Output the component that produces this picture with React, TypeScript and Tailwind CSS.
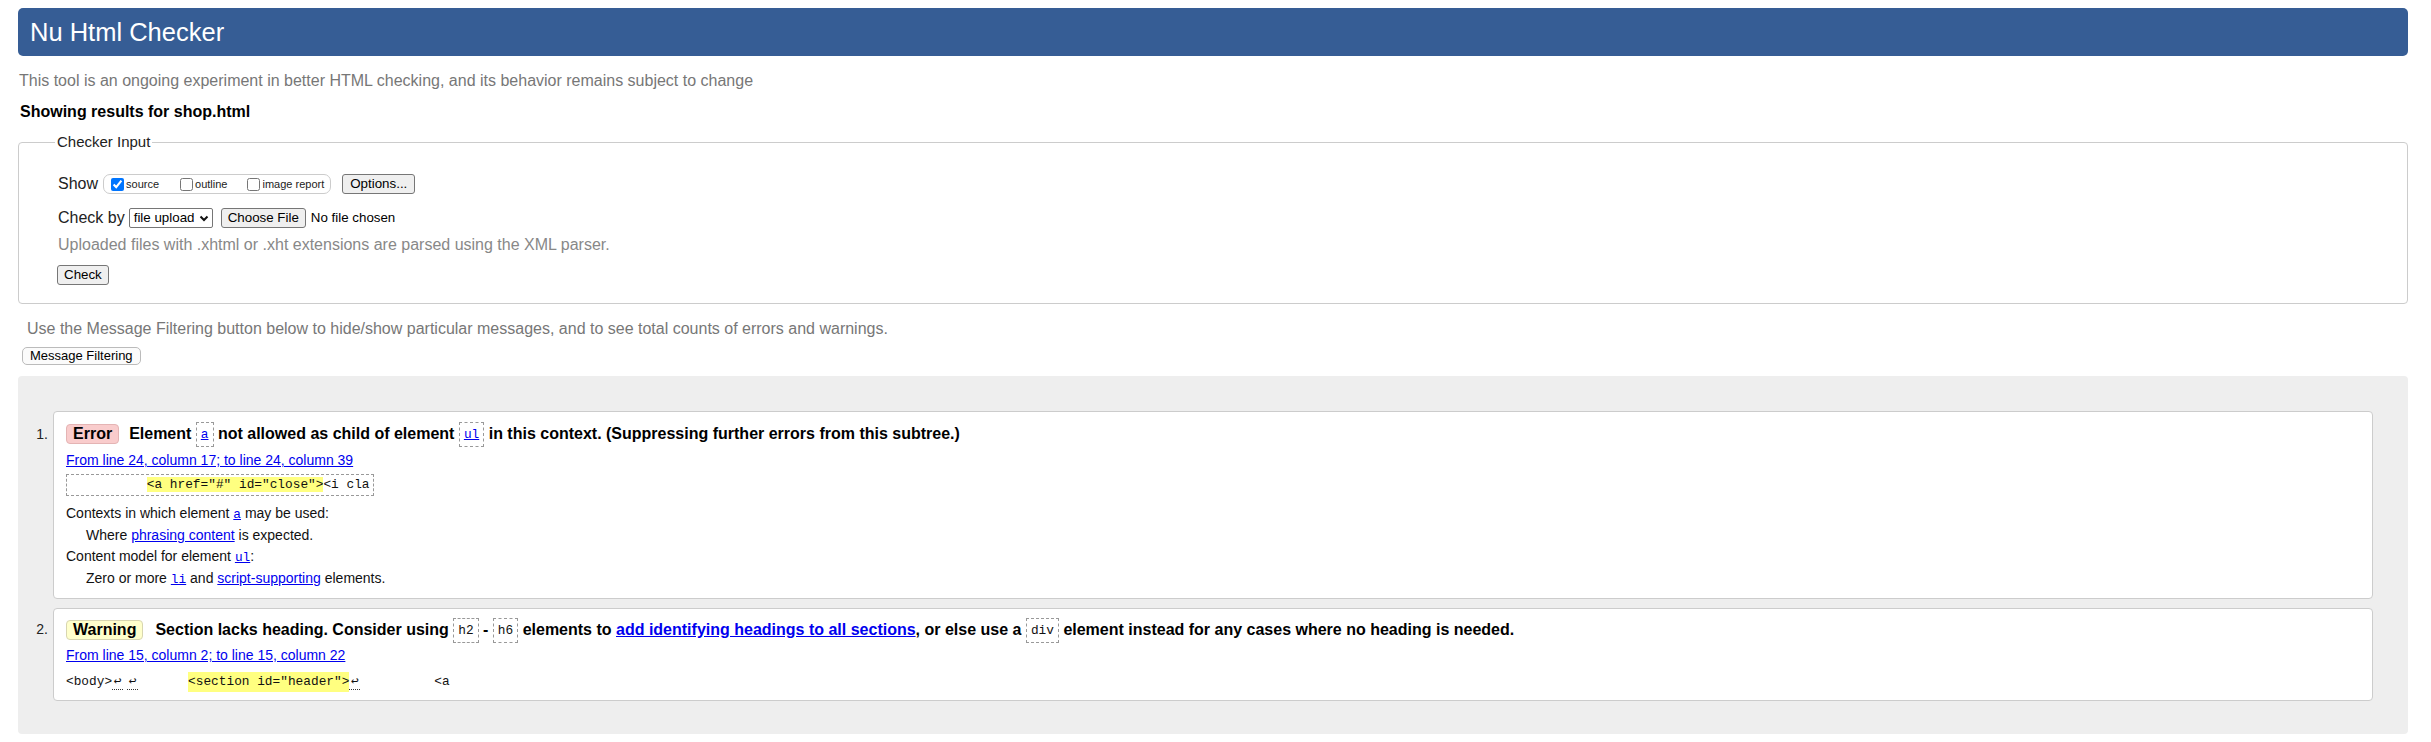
import type { ReactNode } from 'react';

function CodeBox({ children, link }: { children: ReactNode; link?: boolean }) {
    return (
        <span className="inline-block h-[25px] border border-dashed border-[#999] px-[4px] align-middle font-['Liberation_Mono',monospace] text-[12.8px] font-normal leading-[23px] text-[#111]">
            {link ? (
                <a href="#" className="text-[#0000ee] underline">
                    {children}
                </a>
            ) : (
                children
            )}
        </span>
    );
}

function Link({ children, mono, bold }: { children: ReactNode; mono?: boolean; bold?: boolean }) {
    return (
        <a
            href="#"
            className={
                mono
                    ? "font-['Liberation_Mono',monospace] text-[12.8px] text-[#0000ee] underline"
                    : bold
                      ? 'font-bold text-[#0000ee] underline'
                      : 'text-[#0000ee] underline'
            }
        >
            {children}
        </a>
    );
}

function Newline() {
    return (
        <span className="inline-block w-[11px] border-b border-dotted border-[#333] text-center leading-[15px]">
            ↩
        </span>
    );
}

const btn =
    'h-[20px] rounded-[3px] border border-[#767676] bg-[#efefef] px-[6px] text-[13.33px] leading-[18px] text-black';

export default function App() {
    return (
        <div className="min-h-screen bg-white pl-[18px] pr-[23px] pt-[8px] pb-[10px] font-['Liberation_Sans',Arial,sans-serif] text-[#222]">
            <h1 className="h-[48px] rounded-[5px] bg-[#365d95] pl-[12px] text-[25.5px] font-normal leading-[48px] text-white">
                Nu Html Checker
            </h1>

            <p className="mt-[15px] pl-[1px] text-[16px] leading-[20px] text-[#777]">
                This tool is an ongoing experiment in better HTML checking, and its behavior remains subject to change
            </p>
            <p className="mt-[11px] pl-[2px] text-[16px] font-bold leading-[20px] text-black">
                Showing results for shop.html
            </p>

            <fieldset className="mt-[10px] rounded-[4px] border border-[#ccc] pb-[17px] pl-[36px]">
                <legend className="px-[2px] text-[15px] leading-[20px] text-[#222]">Checker Input</legend>

                <div className="mt-[21px] flex h-[22px] items-center pl-[3px]">
                    <span className="text-[16px]">Show</span>
                    <span className="ml-[5px] inline-flex h-[20px] items-center rounded-[7px] border border-[#ccc] pl-[7px] pr-[6px]">
                        <label className="flex items-center">
                            <input type="checkbox" defaultChecked className="m-0 h-[13px] w-[13px]" />
                            <span className="ml-[2px] text-[11px]">source</span>
                        </label>
                        <label className="ml-[21px] flex items-center">
                            <input type="checkbox" className="m-0 h-[13px] w-[13px]" />
                            <span className="ml-[2px] text-[11px]">outline</span>
                        </label>
                        <label className="ml-[20px] flex items-center">
                            <input type="checkbox" className="m-0 h-[13px] w-[13px]" />
                            <span className="ml-[2px] text-[11px]">image report</span>
                        </label>
                    </span>
                    <button className={`ml-[11px] px-[7px] ${btn}`}>Options...</button>
                </div>

                <div className="mt-[12px] flex h-[22px] items-center pl-[3px]">
                    <span className="text-[16px]">Check by</span>
                    <span className="ml-[4px] flex h-[20px] w-[84px] items-center justify-between rounded-[2px] border border-[#767676] pl-[4px] pr-[3px] text-[13.33px] text-black">
                        file upload
                        <svg width="10" height="7" viewBox="0 0 10 7">
                            <path d="M1.5 1.5 L5 5 L8.5 1.5" fill="none" stroke="#111" strokeWidth="2" />
                        </svg>
                    </span>
                    <button className={`ml-[8px] ${btn}`}>Choose File</button>
                    <span className="ml-[5px] text-[13.33px] text-black">No file chosen</span>
                </div>

                <p className="mt-[6px] pl-[3px] text-[16px] leading-[20px] text-[#888]">
                    Uploaded files with .xhtml or .xht extensions are parsed using the XML parser.
                </p>

                <div className="mt-[7px] pl-[2px]">
                    <button className={btn}>Check</button>
                </div>
            </fieldset>

            <p className="mt-[15px] pl-[9px] text-[16px] leading-[20px] text-[#777]">
                Use the Message Filtering button below to hide/show particular messages, and to see total counts of errors
                and warnings.
            </p>
            <button className="ml-[4px] mt-[8px] h-[18px] rounded-[5px] border border-[#bbb] bg-[#fbfbfb] px-[7px] text-[13px] leading-[16px] text-black">
                Message Filtering
            </button>

            <div className="mt-[9px] rounded-[4px] bg-[#eee] pb-[33px] pr-[35px] pt-[35px]">
                <div className="flex items-start">
                    <span className="mt-[13px] w-[35px] pr-[5px] text-right text-[14px] leading-[20px] text-[#222]">1.</span>
                    <div className="flex-1 rounded-[4px] border border-[#ccc] bg-white pb-[8px] pl-[12px] pt-[9px] text-[14px] leading-[21px] text-[#111]">
                        <div className="flex h-[26px] items-center">
                            <span className="rounded-[4px] border border-[#e4b4b4] bg-[#f9cccc] px-[6px] text-[16px] font-bold leading-[18px] text-black">
                                Error
                            </span>
                            <span className="ml-[10px] text-[16px] font-bold leading-[26px] text-black">
                                Element <CodeBox link>a</CodeBox> not allowed as child of element <CodeBox link>ul</CodeBox> in
                                this context. (Suppressing further errors from this subtree.)
                            </span>
                        </div>
                        <div className="mt-[3px] leading-[20px]">
                            <Link>From line 24, column 17; to line 24, column 39</Link>
                        </div>
                        <div className="mt-[4px] block h-[22px] w-fit whitespace-pre border border-dashed border-[#999] px-[3px] font-['Liberation_Mono',monospace] text-[12.8px] leading-[20px]">
                            {'          '}
                            <span className="bg-[#ffff80]">{'<a href="#" id="close">'}</span>
                            {'<i cla'}
                        </div>
                        <div className="mt-[7px]">
                            Contexts in which element <Link mono>a</Link> may be used:
                        </div>
                        <div className="pl-[20px]">
                            Where <Link>phrasing content</Link> is expected.
                        </div>
                        <div>
                            Content model for element <Link mono>ul</Link>:
                        </div>
                        <div className="pl-[20px]">
                            Zero or more <Link mono>li</Link> and <Link>script-supporting</Link> elements.
                        </div>
                    </div>
                </div>

                <div className="mt-[9px] flex items-start">
                    <span className="mt-[11px] w-[35px] pr-[5px] text-right text-[14px] leading-[20px] text-[#222]">2.</span>
                    <div className="flex-1 rounded-[4px] border border-[#ccc] bg-white pb-[8px] pl-[12px] pt-[8px] text-[14px] leading-[20px] text-[#111]">
                        <div className="flex h-[26px] items-center">
                            <span className="rounded-[4px] border border-[#d8d6b0] bg-[#ffffcc] px-[6px] text-[16px] font-bold leading-[18px] text-black">
                                Warning
                            </span>
                            <span className="ml-[12px] text-[16px] font-bold leading-[26px] text-black">
                                Section lacks heading. Consider using <CodeBox>h2</CodeBox> - <CodeBox>h6</CodeBox> elements to{' '}
                                <Link bold>add identifying headings to all sections</Link>, or else use a <CodeBox>div</CodeBox>{' '}
                                element instead for any cases where no heading is needed.
                            </span>
                        </div>
                        <div className="mt-[2px]">
                            <Link>From line 15, column 2; to line 15, column 22</Link>
                        </div>
                        <div className="mt-[7px] flex items-center whitespace-pre font-['Liberation_Mono',monospace] text-[12.8px] leading-[20px]">
                            <span>{'<body>'}</span>
                            <Newline />
                            <span className="ml-[4px]">
                                <Newline />
                            </span>
                            <span className="ml-[50px] bg-[#ffff80]">{'<section id="header">'}</span>
                            <Newline />
                            <span className="ml-[74px]">{'<a'}</span>
                        </div>
                    </div>
                </div>
            </div>
        </div>
    );
}
